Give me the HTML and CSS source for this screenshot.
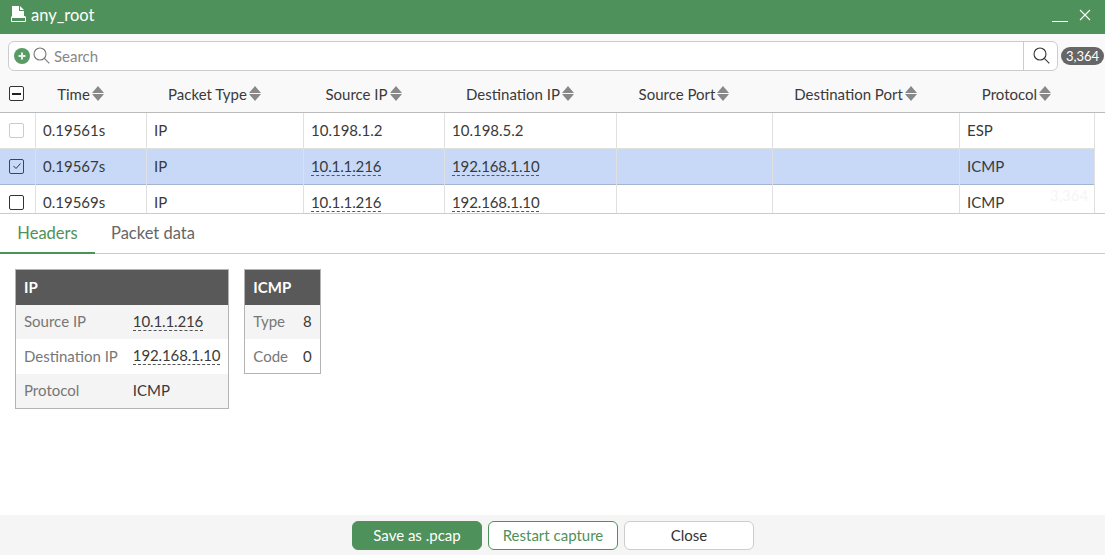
FILE: index.html
```html
<!DOCTYPE html>
<html lang="en">
<head>
<meta charset="utf-8">
<title>any_root</title>
<link rel="stylesheet" href="styles.css">
</head>
<body>
<div class="app">
  <header class="titlebar">
    <svg class="file-icon" width="17" height="17" viewBox="0 0 17 17"><path d="M2 0h7v5h5v6H2z" fill="#fff"/><path d="M10 0l4 4h-4z" fill="#fff"/><path d="M1.500 11.500h14v4h-14z" fill="#4f915a" stroke="#fff" stroke-width="1"/><path d="M1.500 10h2v2h-2zM13.500 10h2v2h-2z" fill="#fff"/></svg>
    <span class="title">any_root</span>
    <span class="spacer"></span>
    <span class="minimize"></span>
    <svg class="close-x" width="12" height="12" viewBox="0 0 12 12"><path d="M1 1l10 10M11 1L1 11" stroke="#fff" stroke-width="1.100" fill="none"/></svg>
  </header>

  <div class="toolbar">
    <div class="searchbox">
      <svg class="add-icon" width="16" height="16" viewBox="0 0 16 16"><circle cx="8" cy="8" r="8" fill="#5a9a64"/><path d="M8 4.500v7M4.500 8h7" stroke="#e8f2e9" stroke-width="2"/></svg>
      <svg class="lens" width="17" height="17" viewBox="0 0 17 17"><circle cx="7" cy="7" r="6" fill="none" stroke="#777" stroke-width="1.100"/><path d="M11.300 11.300l5 5" stroke="#777" stroke-width="1.100"/></svg>
      <span class="placeholder">Search</span>
      <span class="spacer"></span>
      <span class="search-btn"><svg width="17" height="17" viewBox="0 0 17 17"><circle cx="7" cy="7" r="6" fill="none" stroke="#333" stroke-width="1.100"/><path d="M11.300 11.300l5 5" stroke="#333" stroke-width="1.100"/></svg></span>
    </div>
    <span class="count">3,364</span>
  </div>

  <div class="grid head">
    <div class="hcell check"><span class="box box-minus"></span></div>
    <div class="hcell"><span>Time</span><i class="sort"></i></div>
    <div class="hcell"><span>Packet Type</span><i class="sort"></i></div>
    <div class="hcell"><span>Source IP</span><i class="sort"></i></div>
    <div class="hcell"><span>Destination IP</span><i class="sort"></i></div>
    <div class="hcell"><span>Source Port</span><i class="sort"></i></div>
    <div class="hcell"><span>Destination Port</span><i class="sort"></i></div>
    <div class="hcell"><span>Protocol</span><i class="sort"></i></div>
  </div>

  <div class="rows">
    <div class="grid row">
      <div class="cell check"><span class="box box-faint"></span></div>
      <div class="cell">0.19561s</div><div class="cell">IP</div>
      <div class="cell">10.198.1.2</div><div class="cell">10.198.5.2</div>
      <div class="cell"></div><div class="cell"></div><div class="cell">ESP</div>
    </div>
    <div class="grid row selected">
      <div class="cell check"><span class="box box-checked"><svg width="10" height="8" viewBox="0 0 10 8"><path d="M1.500 4l2.500 2.500L8.500 1.500" fill="none" stroke="#333" stroke-width="1"/></svg></span></div>
      <div class="cell">0.19567s</div><div class="cell">IP</div>
      <div class="cell"><span class="link">10.1.1.216</span></div><div class="cell"><span class="link">192.168.1.10</span></div>
      <div class="cell"></div><div class="cell"></div><div class="cell">ICMP</div>
    </div>
    <div class="grid row">
      <div class="cell check"><span class="box"></span></div>
      <div class="cell">0.19569s</div><div class="cell">IP</div>
      <div class="cell"><span class="link">10.1.1.216</span></div><div class="cell"><span class="link">192.168.1.10</span></div>
      <div class="cell"></div><div class="cell"></div><div class="cell">ICMP</div>
    </div>
    <span class="ghost">3,364</span>
  </div>

  <nav class="tabs">
    <span class="tab active">Headers</span>
    <span class="tab">Packet data</span>
  </nav>

  <main class="details">
    <table class="info info-ip">
      <thead><tr><th colspan="2">IP</th></tr></thead>
      <tbody>
        <tr><td class="key">Source IP</td><td><span class="link">10.1.1.216</span></td></tr>
        <tr><td class="key">Destination IP</td><td><span class="link">192.168.1.10</span></td></tr>
        <tr><td class="key">Protocol</td><td>ICMP</td></tr>
      </tbody>
    </table>
    <table class="info info-icmp">
      <thead><tr><th colspan="2">ICMP</th></tr></thead>
      <tbody>
        <tr><td class="key">Type</td><td>8</td></tr>
        <tr><td class="key">Code</td><td>0</td></tr>
      </tbody>
    </table>
  </main>

  <footer class="footer">
    <button class="btn primary">Save as .pcap</button>
    <button class="btn outline">Restart capture</button>
    <button class="btn plain">Close</button>
  </footer>
</div>
</body>
</html>
```
FILE: styles.css
```css
* { box-sizing: border-box; }
html, body { margin: 0; padding: 0; height: 100%; overflow: hidden; }
body { font-family: Lato, "Open Sans", sans-serif; font-size: 15px; color: #3a3a3a; background: #fff; }
.app { display: flex; flex-direction: column; width: 1105px; height: 555px; }
.spacer { flex: 1; }

.titlebar { display: flex; align-items: center; height: 34px; flex: none; background: #4f915a; color: #fff; padding: 0 14px 4px 10px; }
.file-icon { margin-right: 4px; margin-top: -1px; flex: none; }
.title { font-size: 16.500px; }
.minimize { width: 16px; height: 1px; background: #fff; margin-top: 12px; margin-right: 11px; }
.close-x { width: 12px; margin-top: 0; }

.toolbar { display: flex; align-items: center; flex: none; height: 43px; padding: 0 0 0 8px; padding-top: 1px; background: #f9f9f9; }
.searchbox { display: flex; align-items: center; width: 1050px; height: 30px; background: #fff; border: 1px solid #ccc; border-radius: 6px; padding-left: 5px; padding-top: 0; }
.add-icon { flex: none; }
.lens { flex: none; margin-left: 3px; margin-top: -2px; }
.placeholder { margin-left: 4px; margin-top: -1px; color: #888; }
.search-btn { display: flex; align-items: center; justify-content: center; width: 34px; height: 28px; border-left: 1px solid #ccc; padding-left: 1px; padding-bottom: 1px; }
.count { margin-left: 3px; background: #666; color: #fff; font-size: 13px; line-height: 18px; height: 18px; padding: 0; border-radius: 9px; width: 43px; white-space: nowrap; text-align: center; }

.grid { display: grid; grid-template-columns: 36px 111px 157px 141px 172px 156px 187px 135px; }
.head { flex: none; height: 36px; background: #f9f9f9; border-bottom: 1px solid #bbb; }
.hcell { display: flex; align-items: center; justify-content: center; padding-right: 22px; padding-bottom: 2px; gap: 2px; height: 35px; }
.hcell.check { padding: 0 0 2px 9px; justify-content: flex-start; gap: 0; }
.sort { display: flex; flex-direction: column; gap: 1px; width: 12px; height: 15px; flex: none; }
.sort::before { content: ""; border-left: 6px solid transparent; border-right: 6px solid transparent; border-bottom: 7px solid #888; }
.sort::after { content: ""; border-left: 6px solid transparent; border-right: 6px solid transparent; border-top: 7px solid #888; }

.rows { flex: none; height: 101px; overflow: hidden; position: relative; border-bottom: 1px solid #ccc; }
.row { height: 36px; width: 1095px; border-bottom: 1px solid #e0e0e0; }
.row.selected { background: #c7d9f7; border-bottom: 1px solid #a5b4d0; }
.cell { display: flex; align-items: center; padding: 0 0 2px 7px; border-right: 1px solid #e0e0e0; height: 36px; }
.cell.check { padding-left: 9px; }
.box { display: flex; align-items: center; justify-content: center; width: 15px; height: 15px; border: 1px solid #333; border-radius: 2px; background: #fff; }
.box-faint { border-color: #ccc; }
.box-checked { background: transparent; border-color: #444; }
.box-minus::after { content: ""; width: 9px; height: 2px; background: #222; }
.link { border-bottom: 1px dashed #555; line-height: 17px; display: inline-block; margin-top: 1px; letter-spacing: -.12px; }
.ghost { position: absolute; left: 1050px; top: 73px; color: #888; opacity: .08; font-size: 15px; }

.tabs { display: flex; flex: none; height: 40px; border-bottom: 1px solid #ccc; font-size: 16.500px; }
.tab { display: flex; align-items: center; justify-content: center; padding: 0 16px 2px; color: #666; height: 40px; }
.tab.active { width: 95px; color: #4f915a; border-bottom: 2px solid #4f915a; padding: 0 0 1px; }

.details { flex: 1; display: flex; align-items: flex-start; gap: 15px; padding: 15px 15px 0; }
.info { border-collapse: collapse; border: 1px solid #b4b4b4; flex: none; table-layout: auto; }
.info th { background: #595959; color: #fff; text-align: left; font-weight: 700; height: 35px; padding: 0 8px; }
.info td { height: 34.500px; padding: 0 8px 1px; white-space: nowrap; }
.info td.key { padding-right: 7px; }
.info tbody tr:nth-child(odd) { background: #f4f4f4; }
.info .key { color: #777; }

.footer { display: flex; flex: none; align-items: center; justify-content: center; gap: 6px; height: 40px; background: #f5f5f5; padding: 1px 0 0 1px; }
.btn { width: 130px; height: 29px; border-radius: 6px; font: inherit; font-size: 15px; padding: 0 0 2px; }
.primary { background: #4f915a; border: 1px solid #4f915a; color: #fff; }
.outline { background: #fff; border: 1px solid #4f915a; color: #4f915a; }
.plain { background: #fff; border: 1px solid #ccc; color: #333; }
```
